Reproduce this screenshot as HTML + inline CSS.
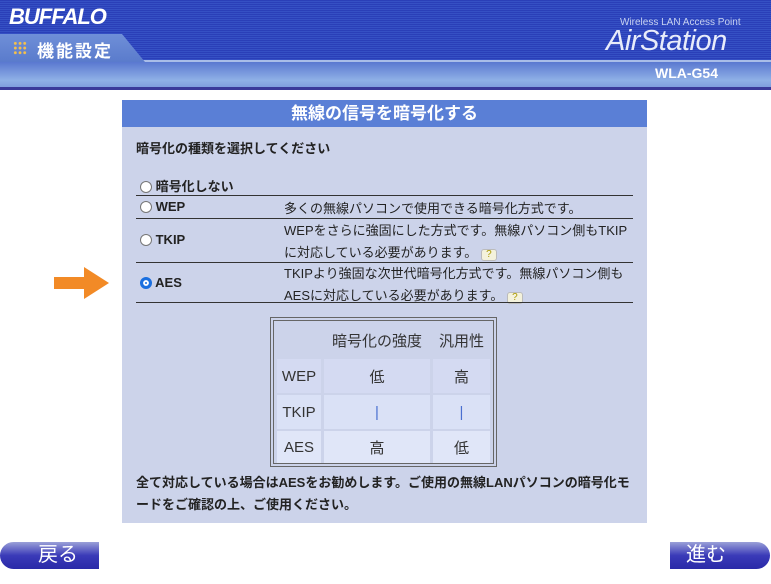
<!DOCTYPE html>
<html><head><meta charset="utf-8"><style>
*{margin:0;padding:0;box-sizing:border-box}
body{width:771px;height:584px;background:#fff;font-family:"Liberation Sans","Noto Sans CJK JP",sans-serif;position:relative;overflow:hidden}
.abs{position:absolute}
#hdr{left:0;top:0;width:771px;height:60px;background:repeating-linear-gradient(180deg,#2a3fb8 0 1px,#3550c4 1px 2px);}
#hdr2{left:0;top:60px;width:771px;height:28px;background:linear-gradient(180deg,#5a78d0,#8fb0e6 70%,#7d9cdc);border-top:2px solid #a9bde8}
#hline{left:0;top:87px;width:771px;height:3px;background:#3a3a9a}
#tab{left:0;top:34px;width:145px;height:28px;background:linear-gradient(180deg,#6f8fd8,#5a7bcc);clip-path:polygon(0 0,122px 0,145px 28px,0 28px)}
.t{color:#fff;font-weight:bold}
#panel{left:122px;top:100px;width:525px;height:423px;background:#ccd3ea}
#ptitle{left:122px;top:100px;width:525px;height:27px;background:#5a7fd6;color:#fff;font-weight:bold;font-size:17px;text-align:center;line-height:27px}
.s{font-size:13px;color:#222}
.b{font-weight:bold}
.hr{left:136px;width:497px;height:1px;background:#333}
.radio{width:12px;height:12px;border:1px solid #777;border-radius:50%;background:#fff;display:inline-block}
table{border-collapse:separate;border-spacing:3px 2px;font-size:15px;color:#333;width:100%}
td{text-align:center;padding:0}
.btn{height:27px;background:linear-gradient(180deg,#9aa0d8,#3a3ab8 50%,#2a2aa8);color:#fff;font-size:20px;line-height:27px}
.q{display:inline-block;width:16px;height:12px;background:#f4f2dc;border:1px solid #bbb;border-radius:3px;font-size:10px;line-height:10px;text-align:center;color:#a90;vertical-align:0}
</style></head><body>
<div id="hdr" class="abs"></div>
<div id="hdr2" class="abs"></div>
<div id="hline" class="abs"></div>
<div id="tab" class="abs"></div>
<div class="abs t" style="left:9px;top:4px;font-size:22px;font-style:italic;letter-spacing:-1px">BUFFALO</div>
<div class="abs" style="left:13px;top:41px;width:14px;height:14px;background:radial-gradient(circle,#f6c04a 1.3px,transparent 1.6px) 0 0/4.7px 4.7px"></div>
<div class="abs t" style="left:37px;top:37px;font-size:17px;letter-spacing:2px">機能設定</div>
<div class="abs" style="left:620px;top:17px;color:#c8d2f0;font-size:10px">Wireless LAN Access Point</div>
<div class="abs" style="left:606px;top:25px;color:#e8ecfa;font-size:29px;font-style:italic;letter-spacing:-0.5px">AirStation</div>
<div class="abs t" style="left:655px;top:65px;font-size:14px">WLA-G54</div>

<div id="panel" class="abs"></div>
<div id="ptitle" class="abs">無線の信号を暗号化する</div>
<div class="abs s b" style="left:136px;top:138px">暗号化の種類を選択してください</div>
<div class="abs s b" style="left:140px;top:176px"><span class="radio" style="vertical-align:-2px"></span> 暗号化しない</div>
<div class="abs hr" style="top:195px"></div>
<div class="abs s b" style="left:140px;top:199px"><span class="radio" style="vertical-align:-2px"></span> WEP</div>
<div class="abs s" style="left:284px;top:198px">多くの無線パソコンで使用できる暗号化方式です。</div>
<div class="abs hr" style="top:218px"></div>
<div class="abs s b" style="left:140px;top:232px"><span class="radio" style="vertical-align:-2px"></span> TKIP</div>
<div class="abs s" style="left:284px;top:220px;line-height:22px">WEPをさらに強固にした方式です。無線パソコン側もTKIP<br>に対応している必要があります。 <span class="q">?</span></div>
<div class="abs hr" style="top:262px"></div>
<div class="abs s b" style="left:140px;top:275px"><span class="radio" style="vertical-align:-2px;border:3px solid #1a6fe0;background:#1a6fe0;box-shadow:inset 0 0 0 2px #fff"></span> AES</div>
<div class="abs s" style="left:284px;top:263px;line-height:22px">TKIPより強固な次世代暗号化方式です。無線パソコン側も<br>AESに対応している必要があります。 <span class="q">?</span></div>
<div class="abs hr" style="top:302px"></div>

<svg class="abs" style="left:54px;top:267px" width="56" height="32"><polygon points="0,10 30,10 30,0 55,16 30,32 30,22 0,22" fill="#f28a26"/></svg>

<div class="abs" style="left:270px;top:317px;width:227px;height:150px;border:1px solid #666;padding:2px">
<div style="border:1px solid #666;height:144px;overflow:hidden">
<table>
<tr style="height:34px"><td style="width:44px"></td><td style="width:106px">暗号化の強度</td><td>汎用性</td></tr>
<tr style="height:34px"><td style="background:#d4daf2">WEP</td><td style="background:#d4daf2">低</td><td style="background:#d4daf2">高</td></tr>
<tr style="height:34px"><td style="background:#dae1f6">TKIP</td><td style="background:#dae1f6;color:#4a6fd0">|</td><td style="background:#dae1f6;color:#4a6fd0">|</td></tr>
<tr style="height:33px"><td style="background:#e0e6f8">AES</td><td style="background:#e0e6f8">高</td><td style="background:#e0e6f8">低</td></tr>
</table></div></div>

<div class="abs s b" style="left:136px;top:472px;line-height:22px">全て対応している場合はAESをお勧めします。ご使用の無線LANパソコンの暗号化モ<br>ードをご確認の上、ご使用ください。</div>

<div class="abs btn" style="left:0;top:542px;width:99px;border-radius:14px 0 0 14px;padding-left:38px">戻る</div>
<div class="abs btn" style="left:670px;top:542px;width:100px;border-radius:0 14px 14px 0;padding-left:16px">進む</div>
</body></html>
